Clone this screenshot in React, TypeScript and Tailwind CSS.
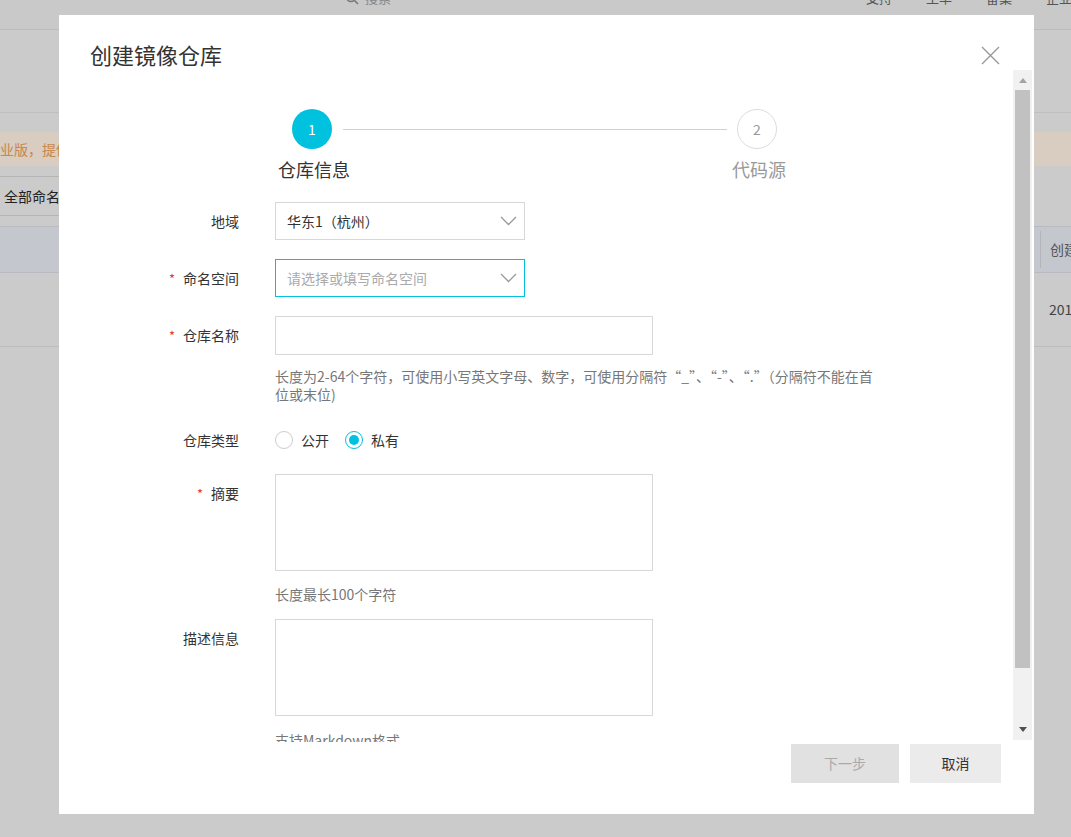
import React from 'react';

// 表单行：左侧标签右对齐，右侧控件
const FormRow: React.FC<{ label: string; required?: boolean; leading?: string; className?: string; children: React.ReactNode }> = ({
  label,
  required,
  leading = 'leading-[38px]',
  className = '',
  children,
}) => (
  <div className={`flex ${className}`}>
    <div className={`w-[180px] shrink-0 text-right text-[14px] text-[#333] ${leading}`}>
      {required && <span className="mr-[8px] text-[13px] text-[#e4393c]">*</span>}
      {label}
    </div>
    <div className="ml-[36px]">{children}</div>
  </div>
);

const Chevron = () => (
  <svg width="17" height="10" viewBox="0 0 17 10" fill="none">
    <path d="M1 1l7.5 7.5L16 1" stroke="#999" strokeWidth="1.3" />
  </svg>
);

const Radio: React.FC<{ checked?: boolean; label: string }> = ({ checked, label }) => (
  <label className="flex items-center">
    <span
      className={`flex h-[18px] w-[18px] items-center justify-center rounded-full border ${
        checked ? 'border-[#00c1de]' : 'border-[#ccc]'
      }`}
    >
      {checked && <span className="h-[10px] w-[10px] rounded-full bg-[#00c1de]" />}
    </span>
    <span className="ml-[8px] text-[14px] leading-[20px] text-[#333]">{label}</span>
  </label>
);

const Background = () => (
  <div>
    {/* 顶部导航（被遮罩） */}
    <div className="h-[30px] overflow-hidden border-b border-[#bcbcbc] bg-[#c9c9c9]">
      <div className="-mt-[10px] flex whitespace-nowrap text-[13px] leading-[16px] text-[#555]">
        <div className="ml-[345px] flex shrink-0 items-center">
          <svg width="14" height="14" viewBox="0 0 14 14" fill="none">
            <circle cx="6" cy="6" r="4.5" stroke="#777" strokeWidth="1.5" />
            <path d="M9.5 9.5L13 13" stroke="#777" strokeWidth="1.5" />
          </svg>
          <span className="ml-[6px] text-[#888]">搜索</span>
        </div>
        <span className="ml-[475px] shrink-0">支持</span>
        <span className="ml-[34px] shrink-0">工单</span>
        <span className="ml-[34px] shrink-0">备案</span>
        <span className="ml-[34px] shrink-0">企业</span>
      </div>
    </div>
    <div className="mt-[82px] h-px bg-[#bfbfbf]" />
    <div className="mt-[19px] flex h-[34px] items-center overflow-hidden bg-[#d9ccc0] text-[14px] text-[#c8874c]">
      <span className="-ml-[14px] whitespace-nowrap">企业版，提供更多功能</span>
    </div>
    <div className="-ml-[10px] mt-[10px] flex h-[40px] w-[200px] items-center border border-[#b5b5b5] pl-[13px] text-[14px] text-[#222]">
      全部命名空间
    </div>
    <div className="mt-[10px] flex h-[47px] items-center border-y border-[#b9bbc1] bg-[#c5c7ce]">
      <div className="ml-[1040px] flex h-[37px] items-center border-l border-[#b2b4ba] pl-[9px] text-[14px] text-[#555] whitespace-nowrap">
        创建时间
      </div>
    </div>
    <div className="flex h-[74px] items-center border-b border-[#bdbdbd]">
      <span className="ml-[1049px] text-[14px] text-[#444] whitespace-nowrap">2018</span>
    </div>
  </div>
);

export default function App() {
  return (
    <div className="relative h-[837px] w-full overflow-hidden bg-[#cbcbcb] font-['Noto_Sans_CJK_SC','Noto_Sans',sans-serif]">
      <Background />

      {/* 弹窗 */}
      <div className="absolute left-[59px] top-[15px] flex h-[799px] w-[975px] flex-col bg-white">
        {/* Header */}
        <div className="flex h-[55px] shrink-0 items-start justify-between pl-[31px] pr-[34px]">
          <h2 className="mt-[24px] text-[22px] font-normal leading-[30px] text-[#333]">创建镜像仓库</h2>
          <button className="mt-[31px]" aria-label="关闭">
            <svg width="19" height="19" viewBox="0 0 19 19" fill="none">
              <path d="M1 1l17 17M18 1L1 18" stroke="#999" strokeWidth="1.4" />
            </svg>
          </button>
        </div>

        {/* Body */}
        <div className="flex h-[672px] shrink-0 overflow-hidden">
          <div className="flex-1 pt-[39px]">
            {/* 步骤条 */}
            <div className="flex items-center pl-[233px]">
              <div className="flex h-[40px] w-[40px] items-center justify-center rounded-full bg-[#00c1de] text-[14px] text-white">1</div>
              <div className="ml-[11px] h-px w-[384px] bg-[#d0d0d0]" />
              <div className="ml-[10px] flex h-[40px] w-[40px] items-center justify-center rounded-full border border-[#dcdcdc] text-[14px] text-[#999]">2</div>
            </div>
            <div className="mt-[8px] flex pl-[219px] text-[18px] leading-[24px]">
              <span className="w-[454px] text-[#333]">仓库信息</span>
              <span className="text-[#999]">代码源</span>
            </div>

            {/* 表单 */}
            <FormRow label="地域" className="mt-[21px]">
              <div className="flex h-[38px] w-[250px] items-center justify-between border border-[#d8d8d8] pl-[11px] pr-[7px] text-[14px] text-[#333]">
                <span>华东1（杭州）</span>
                <Chevron />
              </div>
            </FormRow>

            <FormRow label="命名空间" required className="mt-[19px]">
              <div className="flex h-[38px] w-[250px] items-center justify-between border border-[#00c1de] pl-[11px] pr-[7px] text-[14px] text-[#aaa]">
                <span>请选择或填写命名空间</span>
                <Chevron />
              </div>
            </FormRow>

            <FormRow label="仓库名称" required className="mt-[18px]">
              <div className="h-[39px] w-[378px] border border-[#d8d8d8]" />
              <p className="mt-[12px] w-[630px] text-[14px] leading-[18px] text-[#777]">
                长度为2-64个字符，可使用小写英文字母、数字，可使用分隔符“_”、“-”、“.”（分隔符不能在首
                <br />
                位或末位)
              </p>
            </FormRow>

            <FormRow label="仓库类型" leading="leading-[20px]" className="mt-[27px]">
              <div className="flex items-center">
                <Radio label="公开" />
                <div className="ml-[16px]">
                  <Radio checked label="私有" />
                </div>
              </div>
            </FormRow>

            <FormRow label="摘要" required className="mt-[24px]">
              <div className="h-[97px] w-[378px] border border-[#d8d8d8]" />
              <p className="mt-[14px] text-[14px] leading-[18px] text-[#777]">长度最长100个字符</p>
            </FormRow>

            <FormRow label="描述信息" className="mt-[16px]">
              <div className="h-[97px] w-[378px] border border-[#d8d8d8]" />
              <p className="mt-[15px] text-[14px] leading-[18px] text-[#777]">支持Markdown格式</p>
            </FormRow>
          </div>

          {/* 滚动条 */}
          <div className="mr-[2px] flex h-[670px] w-[19px] shrink-0 flex-col bg-[#f1f1f1]">
            <div className="flex h-[20px] items-center justify-center">
              <svg width="8" height="5" viewBox="0 0 8 5">
                <path d="M4 0L8 5H0z" fill="#a3a3a3" />
              </svg>
            </div>
            <div className="mx-[2px] h-[578px] bg-[#c1c1c1]" />
            <div className="flex-1" />
            <div className="flex h-[22px] items-center justify-center">
              <svg width="8" height="5" viewBox="0 0 8 5">
                <path d="M0 0h8L4 5z" fill="#505050" />
              </svg>
            </div>
          </div>
        </div>

        {/* Footer */}
        <div className="flex justify-end pr-[33px] pt-[2px]">
          <button type="button" className="h-[39px] w-[108px] bg-[#e1e1e1] text-[14px] text-[#aaa]">
            下一步
          </button>
          <button type="button" className="ml-[11px] h-[39px] w-[91px] bg-[#ebebeb] text-[14px] text-[#333]">
            取消
          </button>
        </div>
      </div>
    </div>
  );
}
